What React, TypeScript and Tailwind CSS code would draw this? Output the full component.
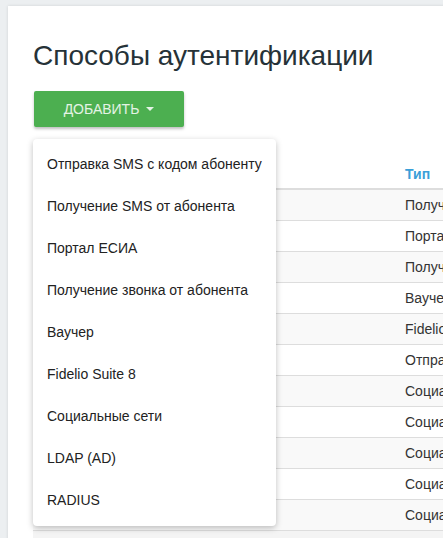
import React from 'react';

const menuItems = [
  'Отправка SMS с кодом абоненту',
  'Получение SMS от абонента',
  'Портал ЕСИА',
  'Получение звонка от абонента',
  'Ваучер',
  'Fidelio Suite 8',
  'Социальные сети',
  'LDAP (AD)',
  'RADIUS',
];

const rows = [
  'Получение SMS от абонента',
  'Портал ЕСИА',
  'Получение звонка от абонента',
  'Ваучер',
  'Fidelio Suite 8',
  'Отправка SMS с кодом абоненту',
  'Социальные сети',
  'Социальные сети',
  'Социальные сети',
  'Социальные сети',
  'Социальные сети',
];

const App: React.FC = () => {
  return (
    <div
      className="w-[443px] h-[538px] overflow-hidden bg-[#eceff1] pl-2 pt-[6px] text-[#333]"
      style={{ fontFamily: '"Liberation Sans", Arial, sans-serif' }}
    >
      <div className="relative w-[640px] h-[600px] bg-white shadow-[0_0_3px_rgba(0,0,0,0.12)] pl-[25px] pt-[33px]">
        {/* заголовок */}
        <h1 className="text-[28px] leading-[34px] text-[#263238] whitespace-nowrap">
          Способы аутентификации
        </h1>

        {/* кнопка */}
        <button className="mt-[18px] ml-px w-[150px] h-[36px] rounded-[2px] bg-[#4caf50] text-[14px] text-white/85 flex items-center justify-center gap-[7px] shadow-[0_2px_3px_rgba(0,0,0,0.25)]">
          <span>ДОБАВИТЬ</span>
          <span className="w-0 h-0 border-l-[4px] border-r-[4px] border-t-[4px] border-l-transparent border-r-transparent border-t-white/85" />
        </button>

        {/* выпадающее меню */}
        <div className="absolute left-[25px] top-[133px] z-10 w-[243px] rounded-[4px] bg-white pt-[4px] pb-[5px] shadow-[0_2px_6px_rgba(0,0,0,0.25)]">
          {menuItems.map((item) => (
            <div key={item} className="h-[42px] flex items-center px-[14px] text-[14px] text-[#222] whitespace-nowrap">
              {item}
            </div>
          ))}
        </div>

        {/* таблица */}
        <div className="mt-[30px] text-[14px]">
          <div className="flex h-[33px] border-b-2 border-[#ddd]">
            <div className="w-[364px]" />
            <div className="pl-2 pt-[7px] font-bold text-[#3a9fd8]">Тип</div>
          </div>
          {rows.map((r, i) => (
            <div
              key={i}
              className={`flex h-[31px] items-center border-b border-[#ddd] ${i % 2 === 0 ? 'bg-[#f9f9f9]' : 'bg-white'}`}
            >
              <div className="w-[364px]" />
              <div className="pl-2 whitespace-nowrap">{r}</div>
            </div>
          ))}
          <div className="h-[20px] bg-[#f4f4f4]" />
        </div>
      </div>
    </div>
  );
};

export default App;
